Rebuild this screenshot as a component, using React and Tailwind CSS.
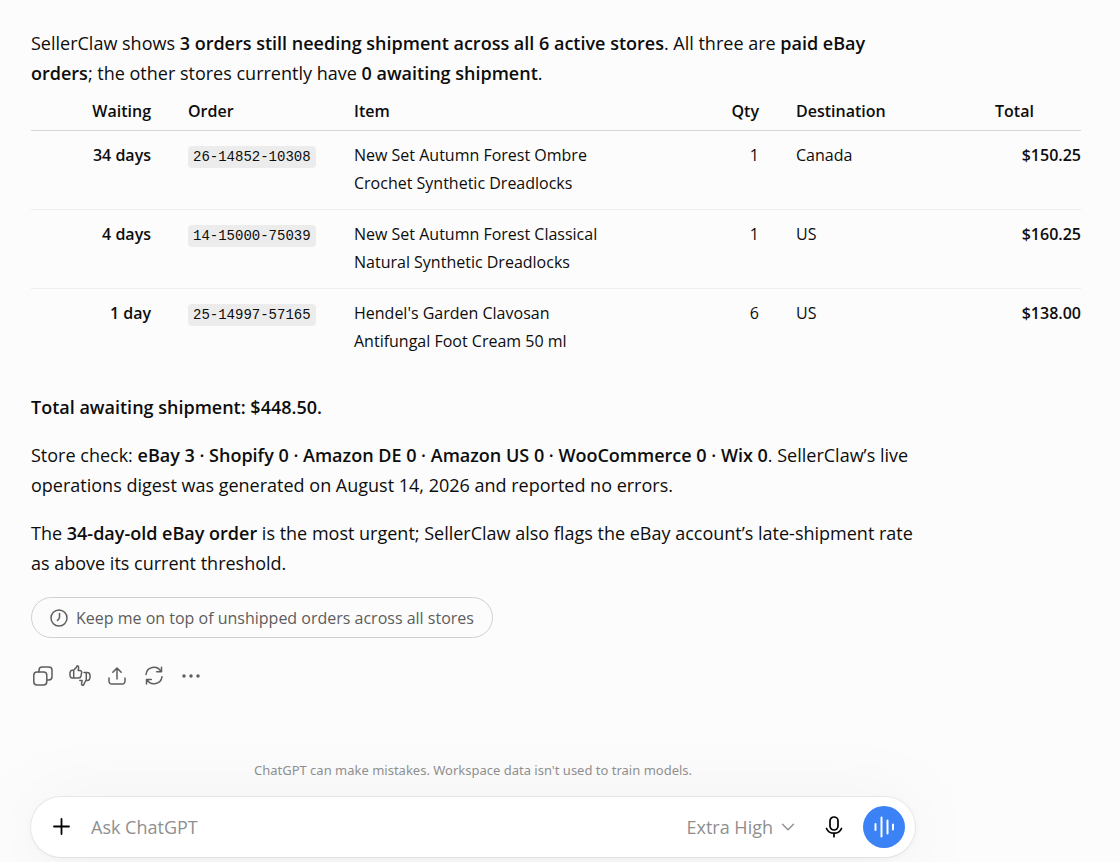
import React, { useState } from "react";
import { ChevronDown } from "lucide-react";

const orders = [
  { waiting: "34 days", id: "26-14852-10308", item: "New Set Autumn Forest Ombre Crochet Synthetic Dreadlocks", qty: 1, destination: "Canada", total: "$150.25" },
  { waiting: "4 days", id: "14-15000-75039", item: "New Set Autumn Forest Classical Natural Synthetic Dreadlocks", qty: 1, destination: "US", total: "$160.25" },
  { waiting: "1 day", id: "25-14997-57165", item: "Hendel's Garden Clavosan Antifungal Foot Cream 50 ml", qty: 6, destination: "US", total: "$138.00" },
];

const stroke = {
  fill: "none",
  stroke: "currentColor",
  strokeWidth: 1.5,
  strokeLinecap: "round",
  strokeLinejoin: "round",
};

const CopyIcon = () => (
  <svg viewBox="0 0 22 22" className="h-[22px] w-[22px]" {...stroke}>
    <rect x="1.8" y="7" width="13" height="13" rx="3.2" />
    <path d="M7 7V5.2A3.2 3.2 0 0 1 10.2 2h6.6A3.2 3.2 0 0 1 20 5.2v6.6a3.2 3.2 0 0 1-3.2 3.2H15" />
  </svg>
);

const ThumbsIcon = () => (
  <svg viewBox="0 0 22 22" className="h-[22px] w-[22px]" {...stroke}>
    <path d="M4.7 5.3H3.2C1.7 5.3.9 6.7.9 9s.9 4 2.300 4h6.3c1.400 0 2.200-.7 2.500-2l.6-3.100c.3-1.500-.4-2.500-1.800-2.500H9.2l.4-2.600C9.800 1.500 9 .8 8.100.8L7.400 2.300 4.700 5.300V13" />
    <path d="M15 7.600h3.200c1.700 0 2.900 1.400 2.900 3.700s-1 4.200-2.700 4.200h-1.600l-2.500 4.800c-1.300.1-2-.9-1.700-2.200l.5-2.500h-2.300" />
    <path d="M17.300 7.700v7.500" />
  </svg>
);

const ShareIcon = () => (
  <svg viewBox="0 0 22 22" className="h-[22px] w-[22px]" {...stroke}>
    <path d="M11 14V3.300M6.800 7.300 11 3.100l4.200 4.200M3 13v3.300A2.700 2.700 0 0 0 5.700 19h10.600a2.700 2.700 0 0 0 2.700-2.700V13" />
  </svg>
);

const RetryIcon = () => (
  <svg viewBox="0 0 22 22" className="h-[22px] w-[22px]" {...stroke}>
    <path d="M3 9.500a8 8 0 0 1 14.800-3.200M18.500 2.200v4.500h-4.800M19 11.700a8 8 0 0 1-14.800 3.200M3.500 19v-4.500h4.800" />
  </svg>
);

const MoreIcon = () => (
  <svg viewBox="0 0 22 22" className="h-[22px] w-[22px]" fill="currentColor">
    <circle cx="4" cy="11" r="1.7" />
    <circle cx="11" cy="11" r="1.7" />
    <circle cx="18" cy="11" r="1.7" />
  </svg>
);

const ClockIcon = () => (
  <svg viewBox="0 0 18 18" className="h-[18px] w-[18px]" {...stroke}>
    <circle cx="9" cy="9" r="8" />
    <path d="M9.5 4.500v3.700c0 1-.5 1.800-2 3.200" />
  </svg>
);

const MicIcon = () => (
  <svg viewBox="0 0 22 22" className="h-[22px] w-[22px]" {...stroke} strokeWidth={1.7}>
    <rect x="7" y="1" width="8" height="13" rx="4" />
    <path d="M3.500 12.500c1.200 2.800 4.100 4.700 7.500 4.700s6.300-1.900 7.500-4.700M11 17.500v3.200" />
  </svg>
);

const VoiceIcon = () => (
  <svg viewBox="0 0 22 22" className="h-[22px] w-[22px]" {...stroke} strokeWidth={2}>
    <path d="M2.500 8v6M8.500 1.500v19M14.500 4.500v13M20 8.500v5" />
  </svg>
);

const actions = [
  { icon: CopyIcon, label: "Copy" },
  { icon: ThumbsIcon, label: "Rate response" },
  { icon: ShareIcon, label: "Share" },
  { icon: RetryIcon, label: "Try again" },
  { icon: MoreIcon, label: "More actions" },
];

const Bold = ({ children }) => <strong className="font-semibold">{children}</strong>;

function OrdersTable() {
  return (
    <table className="w-full table-fixed text-base leading-7">
      <colgroup>
        <col className="w-[157px]" />
        <col className="w-[166px]" />
        <col className="w-[290px]" />
        <col />
        <col className="w-[199px]" />
        <col className="w-[86px]" />
      </colgroup>
      <thead>
        <tr className="border-b border-[#d6d6d6] text-left">
          <th className="pt-[9px] pr-[37px] pb-[5px] text-right font-semibold">Waiting</th>
          <th className="pt-[9px] pb-[5px] font-semibold">Order</th>
          <th className="pt-[9px] pb-[5px] font-semibold">Item</th>
          <th className="pt-[9px] pr-[37px] pb-[5px] text-right font-semibold">Qty</th>
          <th className="pt-[9px] pb-[5px] font-semibold">Destination</th>
          <th className="pt-[9px] pb-[5px] font-semibold">Total</th>
        </tr>
      </thead>
      <tbody>
        {orders.map((o) => (
          <tr key={o.id} className="border-b border-[#ededed] align-top last:border-0">
            <td className="pt-2.5 pr-[37px] pb-3 text-right font-semibold">{o.waiting}</td>
            <td className="pt-2.5 pb-3">
              <code className="rounded bg-[#ececec] px-[5px] py-[3px] font-['Liberation_Mono',monospace] text-sm">{o.id}</code>
            </td>
            <td className="pt-2.5 pr-[37px] pb-3">{o.item}</td>
            <td className="pt-2.5 pr-[37px] pb-3 text-right">{o.qty}</td>
            <td className="pt-2.5 pb-3">{o.destination}</td>
            <td className="pt-2.5 pb-3 text-right font-semibold">{o.total}</td>
          </tr>
        ))}
      </tbody>
    </table>
  );
}

function Composer() {
  const [text, setText] = useState("");

  return (
    <form
      onSubmit={(e) => e.preventDefault()}
      className="flex h-[60px] items-center rounded-full bg-white pr-2.5 pl-5 shadow-[0_0_0_1px_rgba(0,0,0,0.06),0_2px_6px_rgba(0,0,0,0.04),0_4px_80px_8px_rgba(0,0,0,0.04)]"
    >
      <button type="button" aria-label="Add" className="text-black">
        <svg viewBox="0 0 22 22" className="h-[22px] w-[22px]" {...stroke} strokeWidth={1.8}>
          <path d="M10.500 3v15M3 10.500h15" />
        </svg>
      </button>
      <input
        aria-label="Message"
        placeholder="Ask ChatGPT"
        value={text}
        onChange={(e) => setText(e.target.value)}
        className="ml-[18px] min-w-0 flex-1 bg-transparent text-lg outline-none placeholder:text-[#8f8f8f]"
      />
      <button type="button" className="flex items-center gap-1 text-lg text-[#8f8f8f]">
        Extra High
        <ChevronDown className="h-[22px] w-[22px]" strokeWidth={1.5} />
      </button>
      <button type="button" aria-label="Dictate" className="ml-6 text-black">
        <MicIcon />
      </button>
      <button
        type="button"
        aria-label="Start voice mode"
        className="ml-[18px] flex h-[42px] w-[42px] items-center justify-center rounded-full bg-[#3b82f6] text-white"
      >
        <VoiceIcon />
      </button>
    </form>
  );
}

export default function App() {
  return (
    <div className="flex min-h-screen flex-col overflow-hidden bg-[#fcfcfc] pt-7 pr-[39px] pb-[5px] pl-[31px] font-['Open_Sans',sans-serif] text-lg leading-[30px] text-[#0d0d0d]">
      <main>
        <p className="max-w-[892px]">
          SellerClaw shows <Bold>3 orders still needing shipment across all 6 active stores</Bold>. All three are{" "}
          <Bold>paid eBay orders</Bold>; the other stores currently have <Bold>0 awaiting shipment</Bold>.
        </p>
        <OrdersTable />
        <div className="mt-[25px] flex max-w-[892px] flex-col gap-[18px]">
          <p>
            <Bold>Total awaiting shipment: $448.50.</Bold>
          </p>
          <p>
            Store check: <Bold>eBay 3 · Shopify 0 · Amazon DE 0 · Amazon US 0 · WooCommerce 0 · Wix 0</Bold>. SellerClaw’s
            live operations digest was generated on August 14, 2026 and reported no errors.
          </p>
          <p>
            The <Bold>34-day-old eBay order</Bold> is the most urgent; SellerClaw also flags the eBay account’s
            late-shipment rate as above its current threshold.
          </p>
        </div>
        <button className="mt-[19px] flex h-[41px] items-center gap-2 rounded-full border border-[#d0d0d0] px-[18px] text-base font-medium text-[#5d5d5d]">
          <ClockIcon />
          Keep me on top of unshipped orders across all stores
        </button>
        <div className="mt-[27px] flex gap-[15px] pl-px text-[#5d5d5d]">
          {actions.map((a) => (
            <button key={a.label} aria-label={a.label}>
              <a.icon />
            </button>
          ))}
        </div>
      </main>

      <footer className="mt-auto max-w-[884px]">
        <p className="mb-[17px] text-center font-['Noto_Sans',sans-serif] text-[13px] leading-5 text-[#8f8f8f]">
          ChatGPT can make mistakes. Workspace data isn't used to train models.
        </p>
        <Composer />
      </footer>
    </div>
  );
}
